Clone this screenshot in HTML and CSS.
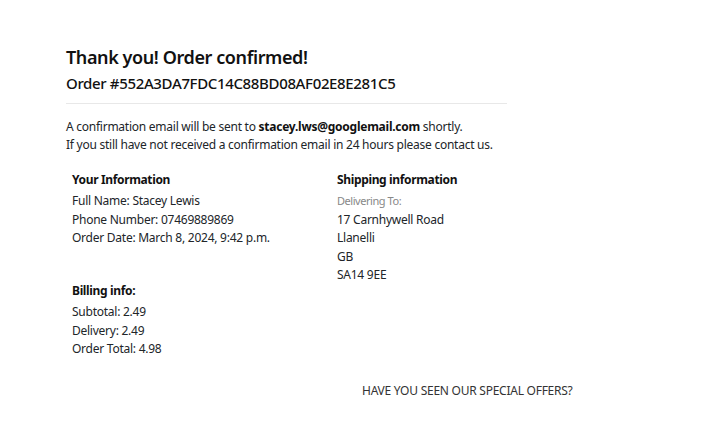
FILE: index.html
```html
<!DOCTYPE html>
<html lang="en">
<head>
<meta charset="utf-8">
<title>Order confirmed</title>
<link rel="stylesheet" href="styles.css">
</head>
<body>
<main class="page">
  <section class="confirm">
    <h1 class="title">Thank you! Order confirmed!</h1>
    <h2 class="order-no">Order #552A3DA7FDC14C88BD08AF02E8E281C5</h2>
    <hr class="rule">
    <p class="note">A confirmation email will be sent to <strong>stacey.lws@googlemail.com</strong> shortly.<br>If you still have not received a confirmation email in 24 hours please contact us.</p>
  </section>
  <section class="details">
    <div class="col">
      <div class="block">
        <h3 class="block-title">Your Information</h3>
        <p class="line">Full Name: Stacey Lewis</p>
        <p class="line">Phone Number: 07469889869</p>
        <p class="line">Order Date: March 8, 2024, 9:42 p.m.</p>
      </div>
      <div class="block billing">
        <h3 class="block-title">Billing info:</h3>
        <p class="line">Subtotal: 2.49</p>
        <p class="line">Delivery: 2.49</p>
        <p class="line">Order Total: 4.98</p>
      </div>
    </div>
    <div class="col">
      <div class="block">
        <h3 class="block-title">Shipping information</h3>
        <p class="line muted">Delivering To:</p>
        <p class="line">17 Carnhywell Road</p>
        <p class="line">Llanelli</p>
        <p class="line">GB</p>
        <p class="line">SA14 9EE</p>
      </div>
    </div>
  </section>
  <p class="offers">HAVE YOU SEEN OUR SPECIAL OFFERS?</p>
</main>
</body>
</html>
```
FILE: styles.css
```css
html, body {
  margin: 0;
  padding: 0;
  background: #fff;
}
body {
  font-family: "Noto Sans", "Open Sans", sans-serif;
  color: #212529;
  font-size: 12px;
  letter-spacing: -0.25px;
}
.page {
  padding: 44px 0 0 66px;
}
.confirm {
  width: 441px;
}
.title {
  margin: 0;
  font-size: 18px;
  font-weight: 600;
  letter-spacing: -0.4px;
  line-height: 26px;
  color: #111;
}
.order-no {
  margin: 0;
  font-size: 15px;
  font-weight: 500;
  letter-spacing: -0.35px;
  line-height: 26px;
  color: #111;
}
.rule {
  margin: 7px 0 14px;
  border: 0;
  border-top: 1px solid #e8e8e8;
}
.note {
  margin: 0;
  line-height: 18px;
  white-space: nowrap;
}
.note strong {
  font-weight: 700;
  color: #111;
}
.details {
  display: grid;
  grid-template-columns: 265px 265px;
  padding-left: 6px;
  margin-top: 16px;
}
.block-title {
  margin: 0 0 2px;
  font-size: 12px;
  font-weight: 700;
  letter-spacing: -0.35px;
  line-height: 20px;
  color: #111;
}
.line {
  margin: 0;
  line-height: 18.5px;
}
.muted {
  color: #888;
  font-size: 11px;
  letter-spacing: -0.45px;
}
.billing {
  margin-top: 33.5px;
}
.offers {
  margin: 23.5px 0 0;
  padding-left: 296px;
  line-height: 18px;
  color: #333;
}
```
